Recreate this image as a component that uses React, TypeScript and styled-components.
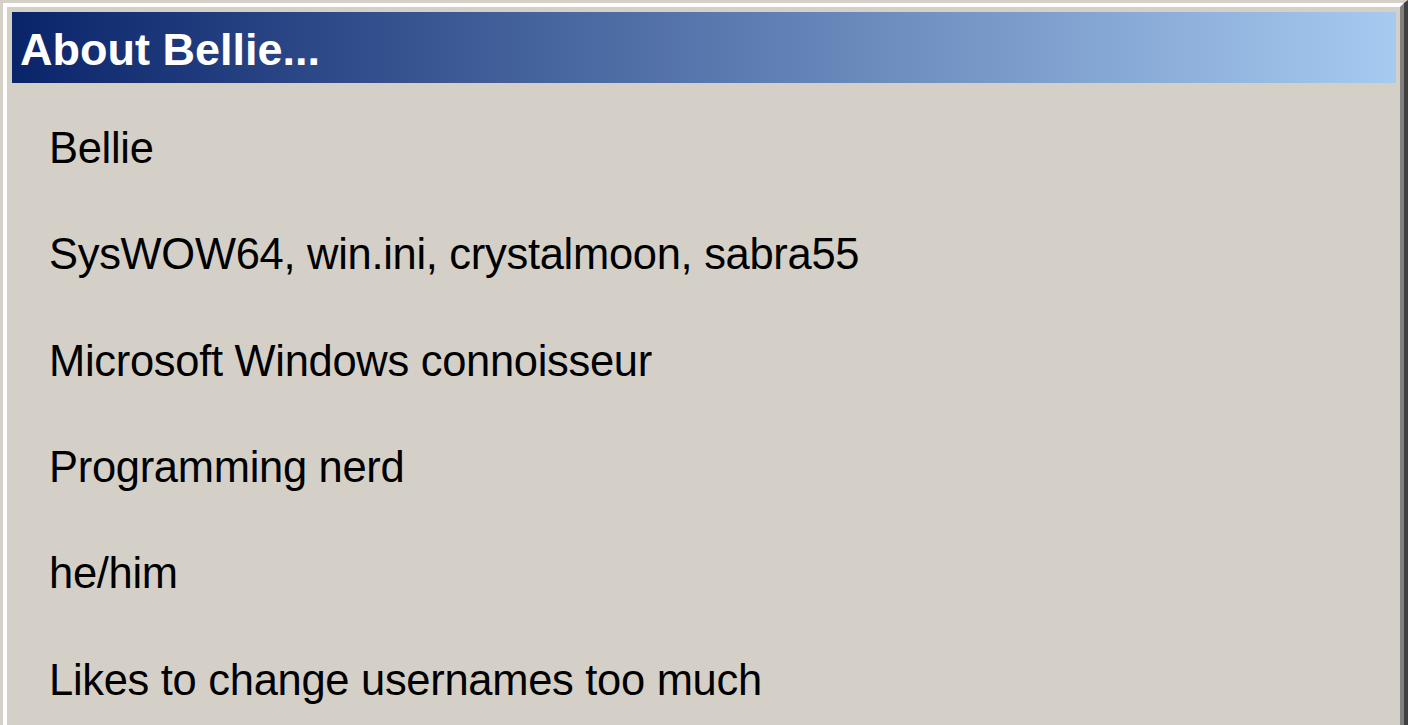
import React from "react";
import styled, { createGlobalStyle } from "styled-components";

const GlobalStyle = createGlobalStyle`
  html, body {
    margin: 0;
    padding: 0;
    overflow: hidden;
    background: #d4d0c8;
  }
  * { box-sizing: border-box; }
`;

const OuterFrame = styled.div`
  width: 1408px;
  border-top: 3px solid #d4d0c8;
  border-left: 3px solid #d4d0c8;
  border-right: 4px solid #404040;
  border-bottom: 4px solid #404040;
  background: #d4d0c8;
`;

const InnerFrame = styled.div`
  border-top: 4px solid #ffffff;
  border-left: 4px solid #ffffff;
  border-right: 4px solid #808080;
  border-bottom: 4px solid #808080;
  padding: 5px 4px 4px 5px;
  display: flex;
  flex-direction: column;
`;

const TitleBar = styled.div`
  height: 71px;
  padding: 4px 0 0 8px;
  background: linear-gradient(to right, #0a246a, #a6caf0);
  display: flex;
  align-items: flex-start;
`;

const TitleText = styled.span`
  font-family: "Liberation Sans", Arial, sans-serif;
  font-weight: 700;
  font-size: 45px;
  line-height: 67px;
  color: #ffffff;
  white-space: nowrap;
`;

const Content = styled.div`
  display: flex;
  flex-direction: column;
  padding: 11.7px 0 60px 37px;
`;

const Line = styled.div`
  font-family: "Liberation Sans", Arial, sans-serif;
  font-size: 43.5px;
  line-height: 106.4px;
  letter-spacing: -0.3px;
  color: #000000;
  white-space: nowrap;
`;

const lines = [
  "Bellie",
  "SysWOW64, win.ini, crystalmoon, sabra55",
  "Microsoft Windows connoisseur",
  "Programming nerd",
  "he/him",
  "Likes to change usernames too much",
];

export default function App() {
  return (
    <>
      <GlobalStyle />
      <OuterFrame>
        <InnerFrame>
          <TitleBar>
            <TitleText>About Bellie...</TitleText>
          </TitleBar>
          <Content>
            {lines.map((l) => (
              <Line key={l}>{l}</Line>
            ))}
          </Content>
        </InnerFrame>
      </OuterFrame>
    </>
  );
}
